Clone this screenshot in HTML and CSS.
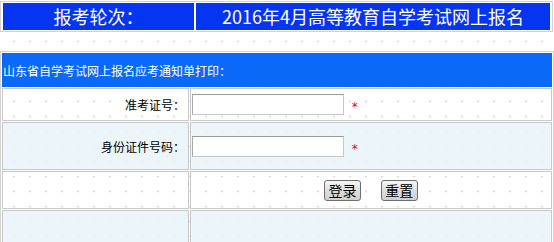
FILE: index.html
```html
<!DOCTYPE html>
<html lang="zh-CN">
<head>
    <meta charset="UTF-8">
    <title>山东省自学考试网上报名</title>
    <link rel="stylesheet" href="styles.css">
</head>
<body>
    <table class="round-table">
        <tr>
            <td class="round-label">报考轮次：</td>
            <td class="round-name">2016年4月高等教育自学考试网上报名</td>
        </tr>
    </table>

    <table class="print-table">
        <tr>
            <td colspan="2" class="print-title">山东省自学考试网上报名应考通知单打印：</td>
        </tr>
        <tr class="row-plain row-short">
            <td class="field-label">准考证号：</td>
            <td class="field-input">
                <input type="text" class="text-box" id="ticketNo">
                <span class="required">*</span>
            </td>
        </tr>
        <tr class="row-tint row-tall">
            <td class="field-label">身份证件号码：</td>
            <td class="field-input">
                <input type="text" class="text-box" id="idNo">
                <span class="required">*</span>
            </td>
        </tr>
        <tr class="row-plain row-buttons">
            <td></td>
            <td class="button-cell">
                <button type="button" class="btn">登录</button>
                <button type="reset" class="btn">重置</button>
            </td>
        </tr>
        <tr class="row-tint row-last">
            <td></td>
            <td></td>
        </tr>
    </table>
</body>
</html>
```

FILE: styles.css
```css
* {
    margin: 0;
    padding: 0;
    box-sizing: border-box;
}

body {
    font-family: "Noto Sans CJK SC", "DejaVu Sans", sans-serif;
    font-size: 12px;
    color: #000;
    background-color: #fff;
    background-image: radial-gradient(circle, #d6d6d6 0.8px, transparent 1.2px);
    background-size: 16px 15px;
    background-position: 6px 4px;
    height: 242px;
    overflow: hidden;
}

/* top bar */
.round-table {
    width: 553px;
    margin-top: 1px;
    border: 1px solid #d2d2d2;
    border-spacing: 2px 1px;
    background: #fff;
}

.round-table td {
    height: 27px;
    background: #0635f2;
    color: #fff;
    font-size: 18px;
    line-height: 27px;
    text-align: center;
}

.round-label {
    width: 191px;
}

/* print form */
.print-table {
    width: 554px;
    margin-top: 19px;
    border: 1px solid #d2d2d2;
    border-spacing: 1px;
}

.print-table td {
    border: 1px solid #c9c9c9;
}

.print-table td.print-title {
    height: 34px;
    background: #0a69f6;
    border-color: #0a69f6;
    color: #fff;
    font-size: 12px;
    padding-left: 0;
    text-align: left;
}

.row-tint td {
    background: rgba(232, 243, 249, 0.85);
}

.row-short td { height: 33px; }
.row-tall td { height: 48px; }
.row-buttons td { height: 38px; }
.row-last td { height: 40px; }

.field-label {
    width: 187px;
    text-align: right;
    padding-right: 3px;
    font-size: 12px;
}

.field-input {
    padding-left: 1px;
}

.text-box {
    width: 152px;
    height: 21px;
    border: 1px solid #c6c6c6;
    border-top-color: #9a9a9a;
    border-left-color: #a8a8a8;
    background: #fff;
    vertical-align: middle;
}

.required {
    display: inline-block;
    margin-left: 5px;
    color: #c8102e;
    font-family: "DejaVu Sans", sans-serif;
    font-size: 12px;
    vertical-align: middle;
    margin-top: 5px;
}

.button-cell {
    padding-left: 133px;
}

.btn {
    width: 37px;
    height: 21px;
    margin-right: 17px;
    border: 1px solid #6f6f6f;
    border-radius: 3px;
    background: linear-gradient(#f6f6f6, #dcdcdc 55%, #cfcfcf);
    font-family: "Noto Sans CJK SC", sans-serif;
    font-size: 14px;
    line-height: 18px;
    color: #000;
    vertical-align: middle;
}
```
